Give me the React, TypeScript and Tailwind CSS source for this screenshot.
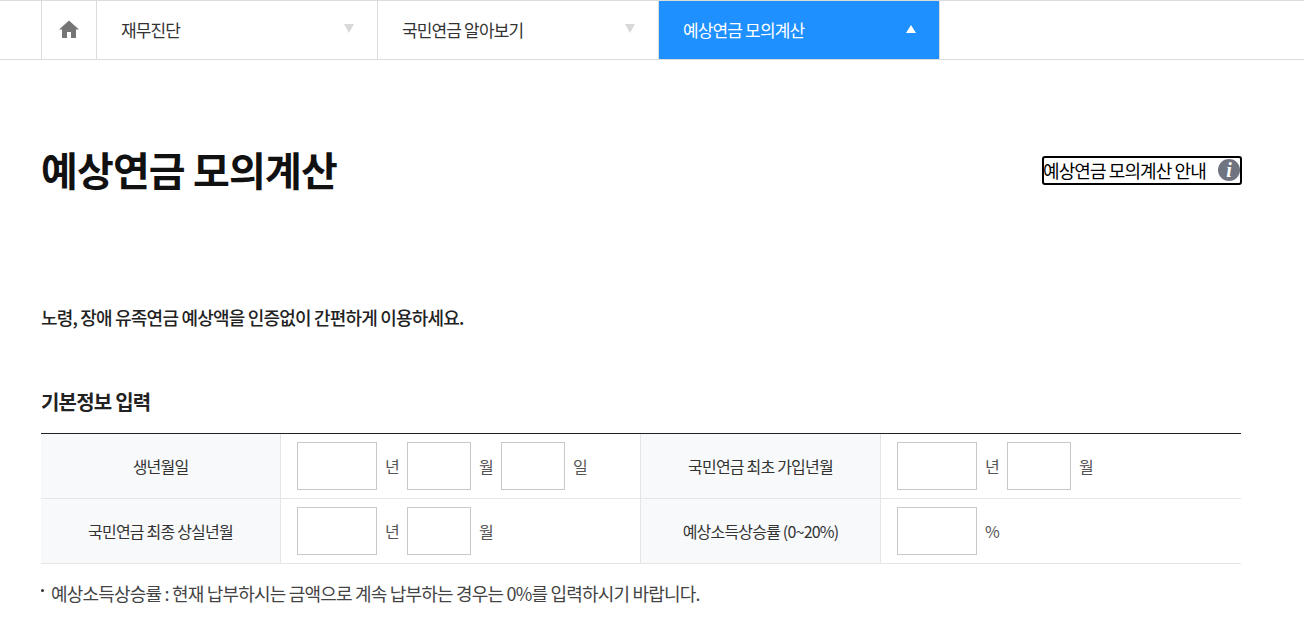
const font = { fontFamily: '"Noto Sans CJK KR", "Noto Sans", sans-serif' };

const Box = ({ w }: { w: string }) => (
  <input type="text" className={`${w} h-[48px] border border-[#c8c8c8] bg-white outline-none`} />
);

const Unit = ({ children }: { children: string }) => (
  <span className="ml-[8px] mr-[8px] w-[14px] text-[16px] tracking-[-0.8px] text-[#555] whitespace-nowrap">{children}</span>
);

const Label = ({ children }: { children: string }) => (
  <div className="w-[240px] shrink-0 flex items-center justify-center bg-[#f8f9fb] border-r border-[#e5e5e5] text-[16px] tracking-[-0.8px] text-[#333]">
    {children}
  </div>
);

const Cell = ({ children, w }: { children: React.ReactNode; w: string }) => (
  <div className={`${w} shrink-0 flex items-center pl-[16px] border-r border-[#e5e5e5] last:border-r-0`}>{children}</div>
);

const NavItem = ({ label }: { label: string }) => (
  <div className="w-[281px] h-full flex items-center justify-between pl-[24px] pr-[23px] border-r border-[#dcdcdc]">
    <span className="text-[17px] tracking-[-0.85px] text-[#333]">{label}</span>
    <span className="w-0 h-0 -mt-[3px] border-l-[5px] border-r-[5px] border-t-[9px] border-l-transparent border-r-transparent border-t-[#d9d9d9]" />
  </div>
);

export default function App() {
  return (
    <div className="w-[1304px] h-[634px] overflow-hidden bg-white" style={font}>
      <nav className="h-[60px] border-t border-b border-[#dcdcdc]">
        <div className="ml-[41px] h-full flex">
          <div className="w-[56px] h-full flex items-center justify-center border-l border-r border-[#dcdcdc]">
            <svg width="20" height="18" viewBox="0 0 20 18" className="-mt-[2px] -ml-[1px]">
              <path d="M10 0.5 L20 9.5 L17 9.5 L17 18 L12 18 L12 12 L8 12 L8 18 L3 18 L3 9.5 L0 9.5 Z" fill="#757575" />
            </svg>
          </div>
          <NavItem label="재무진단" />
          <NavItem label="국민연금 알아보기" />
          <div className="w-[281px] h-full flex items-center justify-between pl-[24px] pr-[23px] bg-[#1e90ff] border-r border-[#dcdcdc]">
            <span className="text-[17px] tracking-[-0.85px] text-white">예상연금 모의계산</span>
            <span className="w-0 h-0 -mt-[3px] border-l-[5px] border-r-[5px] border-b-[8px] border-l-transparent border-r-transparent border-b-white" />
          </div>
        </div>
      </nav>

      <main className="ml-[41px] w-[1200px]">
        <div className="mt-[82px] h-[54px] w-[1201px] flex items-center justify-between">
          <h1 className="text-[40px] leading-[54px] font-bold tracking-[-0.85px] text-[#111]">예상연금 모의계산</h1>
          <a className="mt-[2px] w-[200px] h-[29px] flex items-center justify-between border-2 border-black rounded-[3px]">
            <span className="-ml-[1px] text-[18px] tracking-[-0.9px] text-black whitespace-nowrap">예상연금 모의계산 안내</span>
            <span className="w-[22px] h-[22px] rounded-full bg-[#6f7480] flex items-center justify-center text-white text-[20px] font-bold italic" style={{ fontFamily: '"Liberation Serif", serif' }}>i</span>
          </a>
        </div>

        <p className="mt-[108px] text-[18px] leading-[26px] font-medium tracking-[-0.8px] text-[#222]">
          노령, 장애 유족연금 예상액을 인증없이 간편하게 이용하세요.
        </p>

        <h2 className="mt-[57px] text-[20px] leading-[30px] font-bold tracking-[-0.8px] text-[#222]">기본정보 입력</h2>

        <div className="mt-[16px] border-t border-[#222]">
          <div className="h-[65px] flex border-b border-[#e5e5e5]">
            <Label>생년월일</Label>
            <Cell w="w-[360px]">
              <Box w="w-[80px]" /><Unit>년</Unit><Box w="w-[64px]" /><Unit>월</Unit><Box w="w-[64px]" /><Unit>일</Unit>
            </Cell>
            <Label>국민연금 최초 가입년월</Label>
            <Cell w="w-[360px]">
              <Box w="w-[80px]" /><Unit>년</Unit><Box w="w-[64px]" /><Unit>월</Unit>
            </Cell>
          </div>
          <div className="h-[65px] flex border-b border-[#e5e5e5]">
            <Label>국민연금 최종 상실년월</Label>
            <Cell w="w-[360px]">
              <Box w="w-[80px]" /><Unit>년</Unit><Box w="w-[64px]" /><Unit>월</Unit>
            </Cell>
            <Label>예상소득상승률 (0~20%)</Label>
            <Cell w="w-[360px]">
              <Box w="w-[80px]" /><Unit>%</Unit>
            </Cell>
          </div>
        </div>

        <p className="relative mt-[16px] pl-[10px] text-[18px] leading-[26px] tracking-[-0.8px] text-[#444]">
          <span className="absolute left-0 top-[9px] w-[3px] h-[3px] rounded-full bg-[#333]" />
          예상소득상승률 : 현재 납부하시는 금액으로 계속 납부하는 경우는 0%를 입력하시기 바랍니다.
        </p>
      </main>
    </div>
  );
}
